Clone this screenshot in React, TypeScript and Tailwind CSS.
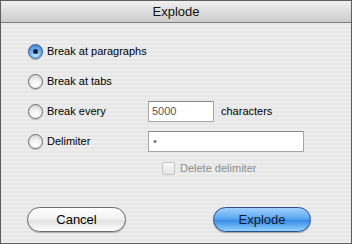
import React from 'react';

function Radio({ checked }: { checked?: boolean }) {
  if (checked) {
    return (
      <span className="flex h-[15px] w-[15px] items-center justify-center rounded-full border border-[#3d5e93] bg-[radial-gradient(circle_at_50%_75%,#c3e4ff_0%,#6fb0ee_45%,#2f6fc6_100%)] shadow-[0_1px_1px_rgba(0,0,0,0.25)]">
        <span className="h-[5px] w-[5px] rounded-full bg-[#0d1f3a]" />
      </span>
    );
  }
  return (
    <span className="h-[15px] w-[15px] rounded-full border border-[#6f6f6f] bg-[radial-gradient(circle_at_50%_80%,#ffffff_0%,#f2f2f2_45%,#c9c9c9_100%)] shadow-[0_1px_1px_rgba(0,0,0,0.2)]" />
  );
}

export default function App() {
  return (
    <div className="flex h-[244px] w-[352px] flex-col overflow-hidden border border-[#5e5e5e] font-['Liberation_Sans',Arial,sans-serif] text-[11px] text-black">
      <div className="flex h-[22px] shrink-0 items-center justify-center border-b border-[#7d7d7d] bg-[linear-gradient(#f0f0f0,#dadada_60%,#cdcdcd)] text-[13px] text-[#111]">
        Explode
      </div>

      <div className="flex flex-1 flex-col bg-[repeating-linear-gradient(0deg,#ededed_0px,#ededed_2px,#e7e7e7_2px,#e7e7e7_4px)] pl-[27px] pt-[13px]">
        <div className="flex h-[30px] items-center gap-[4px]">
          <Radio checked />
          <span>Break at paragraphs</span>
        </div>
        <div className="flex h-[30px] items-center gap-[4px]">
          <Radio />
          <span>Break at tabs</span>
        </div>
        <div className="flex h-[30px] items-center">
          <div className="flex w-[120px] items-center gap-[4px]">
            <Radio />
            <span>Break every</span>
          </div>
          <div className="flex h-[21px] w-[66px] items-center border border-[#a5a5a5] border-t-[#8a8a8a] bg-white px-[3px] text-[#555]">
            5000
          </div>
          <span className="ml-[7px]">characters</span>
        </div>
        <div className="flex h-[30px] items-center">
          <div className="flex w-[120px] items-center gap-[4px]">
            <Radio />
            <span>Delimiter</span>
          </div>
          <div className="flex h-[21px] w-[156px] items-center border border-[#a5a5a5] border-t-[#8a8a8a] bg-white px-[4px] text-[#777]">
            •
          </div>
        </div>
        <div className="flex h-[24px] items-center pl-[134px]">
          <span className="h-[13px] w-[13px] rounded-[2px] border border-[#c4c4c4] bg-[linear-gradient(#fafafa,#e4e4e4)]" />
          <span className="ml-[5px] text-[#8d8d8d]">Delete delimiter</span>
        </div>

        <div className="mt-[27px] flex items-center">
          <button className="ml-[-1px] flex h-[25px] w-[99px] items-center justify-center rounded-full border border-[#6c6c6c] bg-[linear-gradient(#ffffff,#f3f3f3_45%,#e2e2e2_55%,#ffffff)] text-[13px] text-black shadow-[0_1px_1px_rgba(0,0,0,0.25)]">
            Cancel
          </button>
          <button className="ml-[87px] flex h-[25px] w-[98px] items-center justify-center rounded-full border border-[#2c4f8c] bg-[linear-gradient(#9fd0ff,#5ea8f2_45%,#3a8ce6_55%,#8fd3ff)] text-[13px] text-[#0b1a33] shadow-[0_1px_1px_rgba(0,0,0,0.3)]">
            Explode
          </button>
        </div>
      </div>
    </div>
  );
}
